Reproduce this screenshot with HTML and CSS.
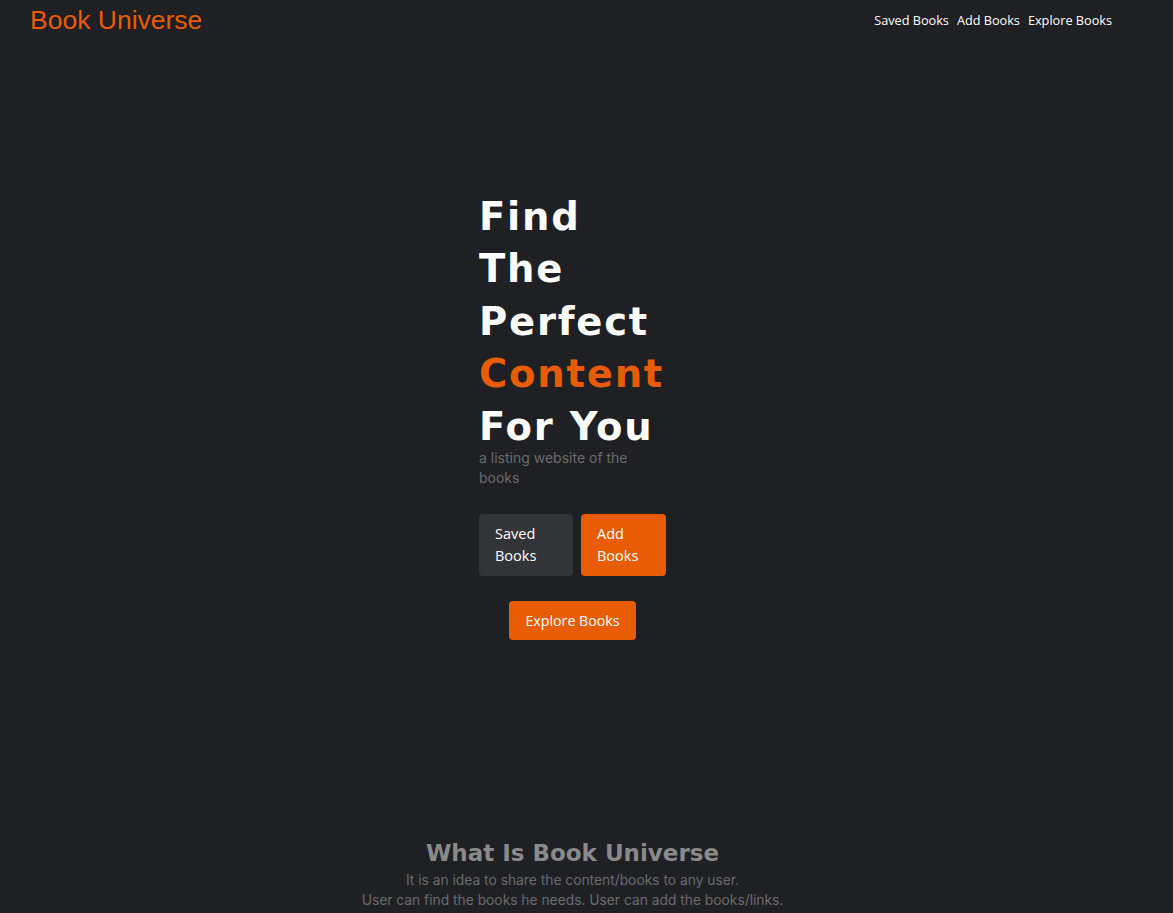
FILE: index.html
```html
<!DOCTYPE html>
<html lang="en">
<head>
<meta charset="utf-8">
<title>Book Universe</title>
<link rel="stylesheet" href="styles.css">
</head>
<body>
<header class="topbar">
  <div class="logo">Book Universe</div>
  <nav class="nav">
    <a href="#">Saved Books</a>
    <a href="#">Add Books</a>
    <a href="#">Explore Books</a>
  </nav>
</header>
<main class="main">
  <section class="hero">
    <h1 class="hero-title">Find<br>The<br>Perfect<br><span class="accent">Content</span><br>For You</h1>
    <p class="hero-sub">a listing website of the books</p>
    <div class="btn-row">
      <a class="btn btn-dark btn-saved" href="#">Saved Books</a>
      <a class="btn btn-orange btn-add" href="#">Add Books</a>
    </div>
    <a class="btn btn-orange btn-explore" href="#">Explore Books</a>
  </section>
  <section class="about">
    <h2 class="about-title">What Is Book Universe</h2>
    <p class="about-text">It is an idea to share the content/books to any user.<br>User can find the books he needs. User can add the books/links.</p>
  </section>
</main>
</body>
</html>
```
FILE: styles.css
```css
html, body {
  margin: 0;
  padding: 0;
  background: #1f2024;
}
body {
  font-family: "Open Sans", "Noto Sans", sans-serif;
  color: #fff;
  min-height: 913px;
  overflow: hidden;
}
.topbar {
  display: flex;
  justify-content: space-between;
  align-items: center;
  height: 40px;
  padding: 0 61px 0 30px;
}
.logo {
  font-family: "Liberation Sans", Arial, sans-serif;
  font-size: 26.5px;
  color: #e85d04;
  line-height: 40px;
}
.nav {
  display: flex;
  gap: 8px;
  font-size: 12.7px;
}
.nav a {
  color: #fff;
  text-decoration: none;
}
.main {
  display: flex;
  flex-direction: column;
  align-items: center;
  padding-right: 28px;
}
.hero {
  width: 187px;
  display: flex;
  flex-direction: column;
  align-items: center;
  margin-top: 151px;
}
.hero-title {
  align-self: stretch;
  margin: 0;
  font-family: "DejaVu Sans", sans-serif;
  font-weight: 700;
  font-size: 38.5px;
  line-height: 52.4px;
  letter-spacing: 1.8px;
  color: #fff;
  white-space: nowrap;
}
.accent {
  color: #e85d04;
}
.hero-sub {
  align-self: stretch;
  margin: -5px 0 0;
  font-family: "Inter", sans-serif;
  font-size: 14px;
  line-height: 20px;
  color: #6b6b6b;
  padding-right: 30px;
}
.btn-row {
  display: flex;
  gap: 8px;
  margin-top: 26px;
  align-self: stretch;
}
.btn {
  display: block;
  box-sizing: border-box;
  padding: 9px 16px;
  border-radius: 4px;
  font-size: 14.5px;
  line-height: 22px;
  color: #fff;
  text-decoration: none;
}
.btn-dark {
  background: #333438;
}
.btn-orange {
  background: #e85d04;
}
.btn-saved {
  width: 94px;
}
.btn-add {
  width: 85px;
}
.btn-explore {
  margin-top: 25px;
  padding: 8.5px 16px;
  font-size: 14.2px;
}
.about {
  margin-top: 196px;
  text-align: center;
}
.about-title {
  margin: 0;
  font-family: "DejaVu Sans", sans-serif;
  font-weight: 700;
  font-size: 23px;
  line-height: 34px;
  color: #8a8a8a;
}
.about-text {
  margin: 0;
  font-family: "Inter", sans-serif;
  font-size: 13.8px;
  line-height: 20px;
  color: #6b6b6b;
}
```
